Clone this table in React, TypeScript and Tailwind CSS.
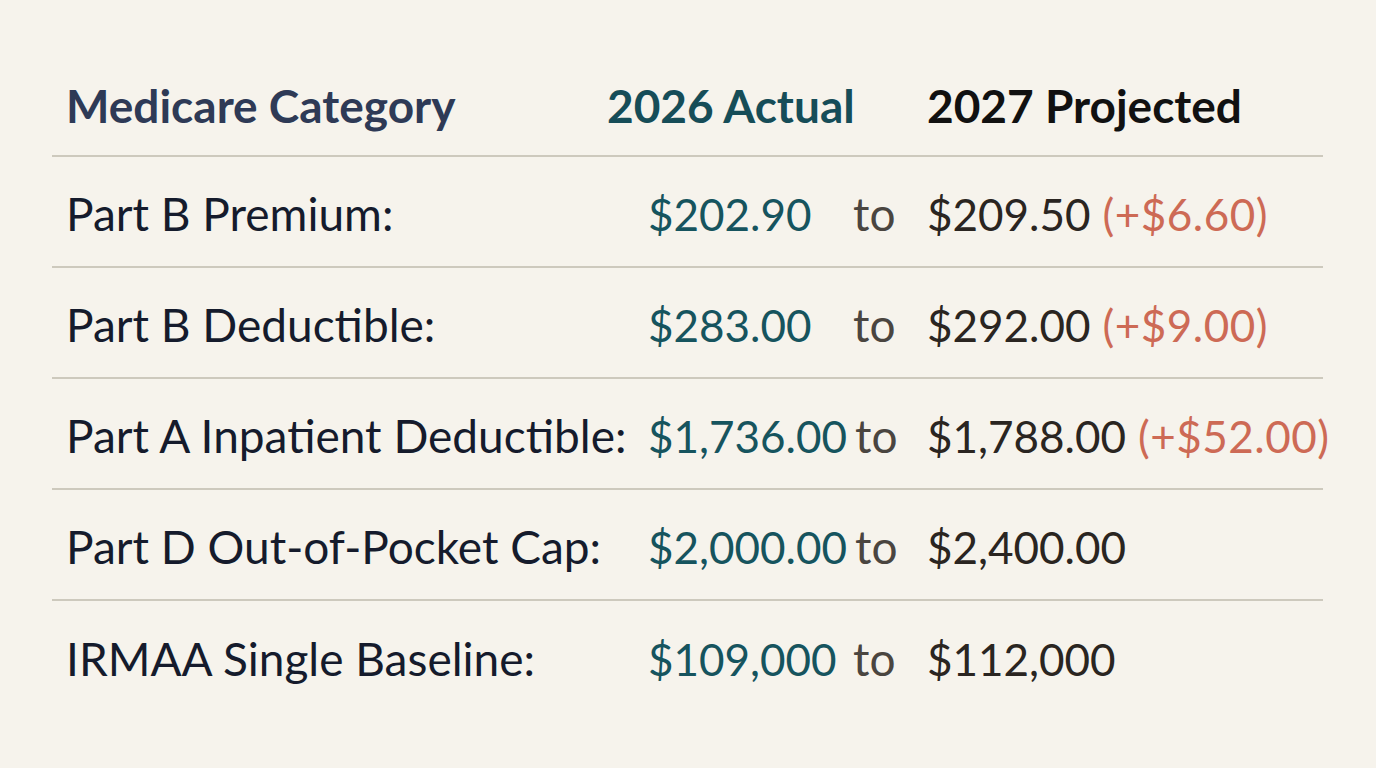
import React from "react";

type Row = { label: string; cur: string; proj: string; delta?: string };

const rows: Row[] = [
  { label: "Part B Premium:", cur: "$202.90", proj: "$209.50", delta: "(+$6.60)" },
  { label: "Part B Deductible:", cur: "$283.00", proj: "$292.00", delta: "(+$9.00)" },
  { label: "Part A Inpatient Deductible:", cur: "$1,736.00", proj: "$1,788.00", delta: "(+$52.00)" },
  { label: "Part D Out-of-Pocket Cap:", cur: "$2,000.00", proj: "$2,400.00" },
  { label: "IRMAA Single Baseline:", cur: "$109,000", proj: "$112,000" },
];

export default function App() {
  return (
    <div
      className="w-[1376px] h-[768px] overflow-hidden bg-[#f6f3ec] pt-[52px] pl-[52px] pr-[53px]"
      style={{ fontFamily: "Lato, 'Noto Sans', sans-serif" }}
    >
      <div className="flex items-center h-[105px] pt-[4px] border-b-2 border-[#cdc9bd] pl-[14px] text-[46px] font-bold">
        <div className="w-[541px] shrink-0 text-[#2e3a56] whitespace-nowrap">Medicare Category</div>
        <div className="w-[320px] shrink-0 text-[#164d58] whitespace-nowrap">2026 Actual</div>
        <div className="shrink-0 text-[#111111] whitespace-nowrap">2027 Projected</div>
      </div>
      {rows.map((r, i) => (
        <div
          key={i}
          className={`flex items-center h-[111px] pt-[4px] pl-[14px] text-[46px] ${i < rows.length - 1 ? "border-b-2 border-[#cdc9bd]" : ""}`}
        >
          <div className="w-[582px] shrink-0 text-[#151b2c] whitespace-nowrap">{r.label}</div>
          <div className="w-[279px] shrink-0 flex items-center gap-[8px] whitespace-nowrap">
            <span className="min-w-[197px] text-[44px] text-[#16545e]">{r.cur}</span>
            <span className="text-[#4a4540]">to</span>
          </div>
          <div className="shrink-0 flex items-center gap-[12px] whitespace-nowrap text-[44px] text-[#2a2521]">
            <span>{r.proj}</span>
            {r.delta && <span className="text-[#cd6a55] tracking-[0.5px]">{r.delta}</span>}
          </div>
        </div>
      ))}
    </div>
  );
}
